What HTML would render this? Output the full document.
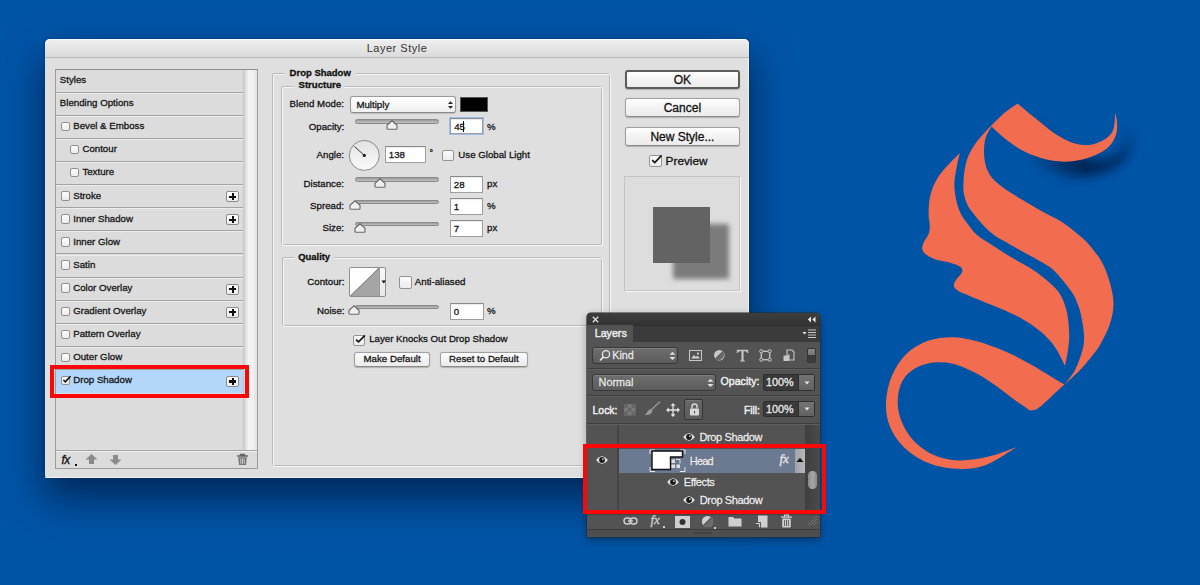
<!DOCTYPE html>
<html><head><meta charset="utf-8"><title>Layer Style</title>
<style>
html,body{margin:0;padding:0;}
body{width:1200px;height:585px;overflow:hidden;position:relative;background:#0054a6;font-family:"Liberation Sans",sans-serif;}
.a{position:absolute;}
.t{position:absolute;line-height:1;white-space:nowrap;font-family:"Liberation Sans",sans-serif;-webkit-text-stroke:0.3px currentColor;}
</style></head><body>
<svg class="a" style="left:0;top:0" width="1200" height="585" viewBox="0 0 1200 585">
<defs><filter id="sh" x="-20%" y="-20%" width="150%" height="180%"><feGaussianBlur stdDeviation="5.5"/></filter>
<linearGradient id="mg" gradientUnits="userSpaceOnUse" x1="1025" y1="0" x2="1085" y2="0"><stop offset="0" stop-color="#000"/><stop offset="1" stop-color="#fff"/></linearGradient><mask id="mR" maskUnits="userSpaceOnUse" x="0" y="0" width="1200" height="585"><rect x="0" y="0" width="1200" height="585" fill="url(#mg)"/></mask></defs>
<g mask="url(#mR)"><path d="M1017.5 103.5 C1021.2 106.6 1033.4 116.8 1040.0 122.0 C1046.6 127.2 1051.3 131.5 1057.0 135.0 C1062.7 138.5 1068.3 141.6 1074.0 143.2 C1079.7 144.8 1085.7 145.6 1091.0 144.8 C1096.3 144.0 1102.2 141.1 1106.0 138.5 C1109.8 135.9 1112.0 133.2 1113.5 129.0 C1115.0 124.8 1114.9 115.7 1115.2 113.0 C1115.5 114.5 1116.9 118.4 1117.0 122.0 C1117.1 125.6 1117.4 130.3 1116.0 134.5 C1114.6 138.7 1112.5 143.3 1108.5 147.0 C1104.5 150.7 1098.4 154.1 1092.0 156.5 C1085.6 158.9 1077.5 161.0 1070.0 161.5 C1062.5 162.0 1054.3 161.2 1046.7 159.5 C1039.1 157.8 1031.1 154.8 1024.4 151.5 C1017.7 148.2 1012.2 144.2 1006.7 140.0 C1001.2 135.8 994.0 128.8 991.5 126.5 C995.8 122.7 1013.2 107.3 1017.5 103.5 Z" transform="translate(13,15)" fill="#001a45" opacity="0.85" filter="url(#sh)"/></g>
<path d="M1017.5 103.5 C1021.2 106.6 1033.4 116.8 1040.0 122.0 C1046.6 127.2 1051.3 131.5 1057.0 135.0 C1062.7 138.5 1068.3 141.6 1074.0 143.2 C1079.7 144.8 1085.7 145.6 1091.0 144.8 C1096.3 144.0 1102.2 141.1 1106.0 138.5 C1109.8 135.9 1112.0 133.2 1113.5 129.0 C1115.0 124.8 1114.9 115.7 1115.2 113.0 C1115.5 114.5 1116.9 118.4 1117.0 122.0 C1117.1 125.6 1117.4 130.3 1116.0 134.5 C1114.6 138.7 1112.5 143.3 1108.5 147.0 C1104.5 150.7 1098.4 154.1 1092.0 156.5 C1085.6 158.9 1077.5 161.0 1070.0 161.5 C1062.5 162.0 1054.3 161.2 1046.7 159.5 C1039.1 157.8 1031.1 154.8 1024.4 151.5 C1017.7 148.2 1012.2 144.2 1006.7 140.0 C1001.2 135.8 994.0 128.8 991.5 126.5 C990.5 128.4 986.9 133.5 985.6 138.0 C984.4 142.5 983.8 148.2 984.0 153.3 C984.2 158.4 984.9 163.9 986.7 168.5 C988.5 173.1 990.8 176.8 995.0 181.0 C999.2 185.2 1004.9 188.8 1012.0 193.5 C1019.1 198.2 1029.4 204.1 1037.8 208.9 C1046.2 213.7 1054.8 217.4 1062.2 222.2 C1069.6 227.0 1077.0 233.2 1082.2 237.8 C1087.4 242.4 1089.8 245.6 1093.3 250.0 C1096.8 254.4 1100.0 258.2 1102.9 264.0 C1105.8 269.8 1108.7 278.2 1110.5 285.0 C1112.3 291.8 1113.7 298.3 1113.5 305.0 C1113.3 311.7 1111.8 318.3 1109.5 325.0 C1107.2 331.7 1102.9 339.8 1100.0 345.0 C1097.1 350.2 1095.3 351.8 1092.0 356.0 C1088.7 360.2 1084.6 365.2 1080.0 370.0 C1075.4 374.8 1067.1 382.1 1064.5 384.5 C1066.2 382.1 1072.0 375.8 1075.0 370.0 C1078.0 364.2 1081.0 355.8 1082.5 350.0 C1084.0 344.2 1084.2 340.8 1084.0 335.0 C1083.8 329.2 1082.0 320.0 1081.0 315.0 C1080.0 310.0 1079.3 308.5 1078.0 305.0 C1076.7 301.5 1075.6 298.2 1073.0 294.0 C1070.4 289.8 1065.8 284.0 1062.5 280.0 C1059.2 276.0 1056.4 272.7 1053.5 270.0 C1050.6 267.3 1049.4 266.7 1045.0 264.0 C1040.6 261.3 1032.8 257.2 1027.0 254.0 C1021.2 250.8 1015.5 247.7 1010.0 244.5 C1004.5 241.3 998.5 238.2 994.0 235.0 C989.5 231.8 986.2 228.3 983.0 225.0 C979.8 221.7 977.1 218.3 974.5 215.0 C971.9 211.7 969.3 208.8 967.5 205.0 C965.7 201.2 964.2 196.2 963.6 192.0 C963.0 187.8 963.4 184.0 963.6 180.0 C963.8 176.0 964.1 172.2 965.0 168.0 C965.9 163.8 966.5 159.8 968.8 155.0 C971.1 150.2 973.6 145.5 979.0 139.0 C984.4 132.5 994.6 121.9 1001.0 116.0 C1007.4 110.1 1014.8 105.6 1017.5 103.5 Z" fill="#f26c50"/>
<path d="M959.9 153.0 C959.5 154.9 958.1 159.9 957.2 164.6 C956.3 169.3 954.9 176.3 954.5 181.0 C954.1 185.7 954.5 189.0 955.0 193.0 C955.5 197.0 956.4 201.3 957.5 205.0 C958.6 208.7 959.7 211.7 961.5 215.0 C963.3 218.3 965.9 221.7 968.5 225.0 C971.1 228.3 973.1 231.7 977.0 235.0 C980.9 238.3 986.9 241.7 992.0 245.0 C997.1 248.3 1002.0 251.7 1007.5 255.0 C1013.0 258.3 1020.6 262.4 1025.0 265.0 C1029.4 267.6 1030.4 268.0 1034.0 270.5 C1037.6 273.0 1042.7 276.8 1046.5 280.0 C1050.3 283.2 1054.2 286.7 1057.0 290.0 C1059.8 293.3 1061.2 295.8 1063.0 300.0 C1064.8 304.2 1066.5 309.2 1067.5 315.0 C1068.5 320.8 1069.2 329.2 1069.2 335.0 C1069.3 340.8 1068.7 344.8 1068.0 350.0 C1067.3 355.2 1065.5 363.3 1065.0 366.0 C1063.4 362.9 1059.3 353.3 1055.4 347.7 C1051.5 342.1 1047.2 337.2 1041.5 332.3 C1035.8 327.4 1028.7 322.6 1021.5 318.5 C1014.3 314.4 1006.2 311.0 998.5 307.7 C990.8 304.4 980.6 300.6 975.4 298.5 C970.2 296.4 970.2 296.1 967.5 295.0 C964.8 293.9 961.5 293.1 959.2 291.6 C956.9 290.1 954.2 288.2 953.8 286.1 C953.3 284.1 955.1 281.6 956.5 279.3 C957.9 277.0 961.3 274.6 962.0 272.5 C962.7 270.4 962.4 268.6 960.6 267.0 C958.8 265.4 954.9 264.0 951.0 262.9 C947.1 261.8 941.5 261.5 937.4 260.1 C933.3 258.7 928.9 256.5 926.4 254.7 C923.9 252.9 922.8 251.2 922.3 249.2 C921.8 247.1 922.7 244.9 923.7 242.4 C924.7 239.9 927.5 236.9 928.5 234.2 C929.5 231.5 929.8 229.0 929.8 226.0 C929.8 223.0 928.8 220.1 928.7 216.0 C928.6 211.9 928.6 206.3 929.2 201.6 C929.9 196.9 930.8 192.5 932.6 187.9 C934.4 183.3 937.0 178.5 940.1 174.2 C943.2 169.9 947.7 165.4 951.0 161.9 C954.3 158.4 958.4 154.5 959.9 153.0 Z" fill="#f26c50"/>
<path d="M1064.5 384.5 C1062.3 383.2 1057.2 380.3 1051.6 377.0 C1046.0 373.7 1037.8 368.5 1031.0 364.6 C1024.2 360.7 1017.3 356.9 1010.5 353.7 C1003.7 350.5 996.6 347.8 990.0 345.5 C983.4 343.2 977.4 341.2 971.0 339.8 C964.6 338.4 959.0 337.0 951.8 337.2 C944.6 337.4 935.4 338.0 927.8 340.8 C920.2 343.6 912.3 348.1 906.3 353.9 C900.3 359.7 895.4 367.5 892.0 375.5 C888.6 383.5 886.4 393.4 886.0 401.8 C885.6 410.2 886.6 418.1 889.6 425.7 C892.6 433.3 897.5 441.0 903.9 447.2 C910.3 453.4 919.0 459.2 927.8 462.8 C936.6 466.4 947.0 468.4 956.6 468.8 C966.2 469.2 975.3 468.8 985.3 465.2 C995.3 461.6 1011.2 450.2 1016.4 447.2 C1011.6 448.8 997.3 454.6 987.7 456.8 C978.1 459.0 968.1 460.8 958.9 460.4 C949.7 460.0 940.6 458.2 932.6 454.4 C924.6 450.6 916.7 444.5 911.1 437.7 C905.5 430.9 901.1 421.7 899.1 413.7 C897.1 405.7 897.5 396.6 899.1 389.8 C900.7 383.0 903.9 377.5 908.7 373.1 C913.5 368.7 920.6 365.1 927.8 363.5 C935.0 361.9 943.8 361.9 951.8 363.5 C959.8 365.1 968.5 369.5 975.7 373.1 C982.9 376.7 988.4 380.6 994.8 385.0 C1001.2 389.4 1008.2 395.2 1014.0 399.4 C1019.8 403.6 1027.1 408.6 1029.7 410.4 C1030.8 410.2 1033.6 410.6 1036.0 409.5 C1038.4 408.4 1041.0 406.1 1044.0 403.5 C1047.0 400.9 1050.6 397.2 1054.0 394.0 C1057.4 390.8 1062.8 386.1 1064.5 384.5 Z" fill="#f26c50"/>
</svg>
<div class="a" style="left:45.00px;top:38.50px;width:704.00px;height:439.50px;background:#dfdfdf;border-radius:5px 5px 3px 3px;box-shadow:0 20px 40px 0px rgba(0,8,35,0.6),0 0 3px rgba(0,0,0,0.2);"></div>
<div class="a" style="left:45.00px;top:38.50px;width:704.00px;height:19.00px;background:linear-gradient(#eeeeee,#dadada);border-radius:5px 5px 0 0;border-top:1px solid #fafafa;box-sizing:border-box;"></div>
<div class="a" style="left:45.00px;top:57.00px;width:704.00px;height:1.00px;background:#b8b8b8;"></div>
<div class="a" style="left:747.50px;top:58.00px;width:1.50px;height:420.00px;background:#f2f2f2;"></div>
<div class="a" style="left:45.00px;top:476.80px;width:704.00px;height:1.20px;background:#f2f2f2;border-radius:0 0 3px 3px;"></div>
<div class="t" style="left:97.00px;width:600px;text-align:center;top:43.29px;font-size:11px;font-weight:400;color:#333;letter-spacing:0.5px;-webkit-text-stroke:0;">Layer Style</div>
<div class="a" style="left:54.50px;top:68.50px;width:203.00px;height:400.00px;background:#dcdcdc;border:1px solid #9c9c9c;border-top-color:#8e8e8e;box-sizing:border-box;"></div>
<div class="a" style="left:242.50px;top:69.50px;width:14.00px;height:381.00px;background:linear-gradient(90deg,#d0d0d0,#f4f4f4 35%,#f2f2f2 65%,#e2e2e2);border-left:1px solid #c8c8c8;box-sizing:border-box;"></div>
<div class="a" style="left:55.50px;top:91.70px;width:187.00px;height:1.10px;background:#a2a2a2;"></div>
<div class="a" style="left:55.50px;top:92.80px;width:187.00px;height:0.70px;background:#ededed;"></div>
<div class="t" style="left:59.80px;top:75.09px;font-size:9.7px;font-weight:400;color:#161616;">Styles</div>
<div class="a" style="left:55.50px;top:114.80px;width:187.00px;height:1.10px;background:#a2a2a2;"></div>
<div class="a" style="left:55.50px;top:115.90px;width:187.00px;height:0.70px;background:#ededed;"></div>
<div class="t" style="left:59.80px;top:98.19px;font-size:9.7px;font-weight:400;color:#161616;">Blending Options</div>
<div class="a" style="left:55.50px;top:137.90px;width:187.00px;height:1.10px;background:#a2a2a2;"></div>
<div class="a" style="left:55.50px;top:139.00px;width:187.00px;height:0.70px;background:#ededed;"></div>
<div class="a" style="left:60.50px;top:121.70px;width:9.50px;height:9.50px;background:linear-gradient(#fdfdfd,#ececec);border:1px solid #8f8f8f;border-radius:2px;box-sizing:border-box;"></div>
<div class="t" style="left:73.20px;top:121.29px;font-size:9.7px;font-weight:400;color:#161616;">Bevel &amp; Emboss</div>
<div class="a" style="left:55.50px;top:161.00px;width:187.00px;height:1.10px;background:#a2a2a2;"></div>
<div class="a" style="left:55.50px;top:162.10px;width:187.00px;height:0.70px;background:#ededed;"></div>
<div class="a" style="left:69.80px;top:144.80px;width:9.50px;height:9.50px;background:linear-gradient(#fdfdfd,#ececec);border:1px solid #8f8f8f;border-radius:2px;box-sizing:border-box;"></div>
<div class="t" style="left:82.40px;top:144.39px;font-size:9.7px;font-weight:400;color:#161616;">Contour</div>
<div class="a" style="left:55.50px;top:184.10px;width:187.00px;height:1.10px;background:#a2a2a2;"></div>
<div class="a" style="left:55.50px;top:185.20px;width:187.00px;height:0.70px;background:#ededed;"></div>
<div class="a" style="left:69.80px;top:167.90px;width:9.50px;height:9.50px;background:linear-gradient(#fdfdfd,#ececec);border:1px solid #8f8f8f;border-radius:2px;box-sizing:border-box;"></div>
<div class="t" style="left:82.40px;top:167.49px;font-size:9.7px;font-weight:400;color:#161616;">Texture</div>
<div class="a" style="left:55.50px;top:207.20px;width:187.00px;height:1.10px;background:#a2a2a2;"></div>
<div class="a" style="left:55.50px;top:208.30px;width:187.00px;height:0.70px;background:#ededed;"></div>
<div class="a" style="left:60.50px;top:191.00px;width:9.50px;height:9.50px;background:linear-gradient(#fdfdfd,#ececec);border:1px solid #8f8f8f;border-radius:2px;box-sizing:border-box;"></div>
<div class="t" style="left:73.20px;top:190.59px;font-size:9.7px;font-weight:400;color:#161616;">Stroke</div>
<div class="a" style="left:226.40px;top:191.20px;width:12.30px;height:11.00px;background:linear-gradient(#ffffff,#ececec);border:1px solid #8a8a8a;border-radius:2px;box-sizing:border-box;"></div>
<div class="a" style="left:229.00px;top:195.60px;width:7.20px;height:2.20px;background:#111;"></div>
<div class="a" style="left:231.50px;top:193.10px;width:2.20px;height:7.20px;background:#111;"></div>
<div class="a" style="left:55.50px;top:230.30px;width:187.00px;height:1.10px;background:#a2a2a2;"></div>
<div class="a" style="left:55.50px;top:231.40px;width:187.00px;height:0.70px;background:#ededed;"></div>
<div class="a" style="left:60.50px;top:214.10px;width:9.50px;height:9.50px;background:linear-gradient(#fdfdfd,#ececec);border:1px solid #8f8f8f;border-radius:2px;box-sizing:border-box;"></div>
<div class="t" style="left:73.20px;top:213.69px;font-size:9.7px;font-weight:400;color:#161616;">Inner Shadow</div>
<div class="a" style="left:226.40px;top:214.30px;width:12.30px;height:11.00px;background:linear-gradient(#ffffff,#ececec);border:1px solid #8a8a8a;border-radius:2px;box-sizing:border-box;"></div>
<div class="a" style="left:229.00px;top:218.70px;width:7.20px;height:2.20px;background:#111;"></div>
<div class="a" style="left:231.50px;top:216.20px;width:2.20px;height:7.20px;background:#111;"></div>
<div class="a" style="left:55.50px;top:253.40px;width:187.00px;height:1.10px;background:#a2a2a2;"></div>
<div class="a" style="left:55.50px;top:254.50px;width:187.00px;height:0.70px;background:#ededed;"></div>
<div class="a" style="left:60.50px;top:237.20px;width:9.50px;height:9.50px;background:linear-gradient(#fdfdfd,#ececec);border:1px solid #8f8f8f;border-radius:2px;box-sizing:border-box;"></div>
<div class="t" style="left:73.20px;top:236.79px;font-size:9.7px;font-weight:400;color:#161616;">Inner Glow</div>
<div class="a" style="left:55.50px;top:276.50px;width:187.00px;height:1.10px;background:#a2a2a2;"></div>
<div class="a" style="left:55.50px;top:277.60px;width:187.00px;height:0.70px;background:#ededed;"></div>
<div class="a" style="left:60.50px;top:260.30px;width:9.50px;height:9.50px;background:linear-gradient(#fdfdfd,#ececec);border:1px solid #8f8f8f;border-radius:2px;box-sizing:border-box;"></div>
<div class="t" style="left:73.20px;top:259.89px;font-size:9.7px;font-weight:400;color:#161616;">Satin</div>
<div class="a" style="left:55.50px;top:299.60px;width:187.00px;height:1.10px;background:#a2a2a2;"></div>
<div class="a" style="left:55.50px;top:300.70px;width:187.00px;height:0.70px;background:#ededed;"></div>
<div class="a" style="left:60.50px;top:283.40px;width:9.50px;height:9.50px;background:linear-gradient(#fdfdfd,#ececec);border:1px solid #8f8f8f;border-radius:2px;box-sizing:border-box;"></div>
<div class="t" style="left:73.20px;top:282.99px;font-size:9.7px;font-weight:400;color:#161616;">Color Overlay</div>
<div class="a" style="left:226.40px;top:283.60px;width:12.30px;height:11.00px;background:linear-gradient(#ffffff,#ececec);border:1px solid #8a8a8a;border-radius:2px;box-sizing:border-box;"></div>
<div class="a" style="left:229.00px;top:288.00px;width:7.20px;height:2.20px;background:#111;"></div>
<div class="a" style="left:231.50px;top:285.50px;width:2.20px;height:7.20px;background:#111;"></div>
<div class="a" style="left:55.50px;top:322.70px;width:187.00px;height:1.10px;background:#a2a2a2;"></div>
<div class="a" style="left:55.50px;top:323.80px;width:187.00px;height:0.70px;background:#ededed;"></div>
<div class="a" style="left:60.50px;top:306.50px;width:9.50px;height:9.50px;background:linear-gradient(#fdfdfd,#ececec);border:1px solid #8f8f8f;border-radius:2px;box-sizing:border-box;"></div>
<div class="t" style="left:73.20px;top:306.09px;font-size:9.7px;font-weight:400;color:#161616;">Gradient Overlay</div>
<div class="a" style="left:226.40px;top:306.70px;width:12.30px;height:11.00px;background:linear-gradient(#ffffff,#ececec);border:1px solid #8a8a8a;border-radius:2px;box-sizing:border-box;"></div>
<div class="a" style="left:229.00px;top:311.10px;width:7.20px;height:2.20px;background:#111;"></div>
<div class="a" style="left:231.50px;top:308.60px;width:2.20px;height:7.20px;background:#111;"></div>
<div class="a" style="left:55.50px;top:345.80px;width:187.00px;height:1.10px;background:#a2a2a2;"></div>
<div class="a" style="left:55.50px;top:346.90px;width:187.00px;height:0.70px;background:#ededed;"></div>
<div class="a" style="left:60.50px;top:329.60px;width:9.50px;height:9.50px;background:linear-gradient(#fdfdfd,#ececec);border:1px solid #8f8f8f;border-radius:2px;box-sizing:border-box;"></div>
<div class="t" style="left:73.20px;top:329.19px;font-size:9.7px;font-weight:400;color:#161616;">Pattern Overlay</div>
<div class="a" style="left:55.50px;top:368.90px;width:187.00px;height:1.10px;background:#a2a2a2;"></div>
<div class="a" style="left:55.50px;top:370.00px;width:187.00px;height:0.70px;background:#ededed;"></div>
<div class="a" style="left:60.50px;top:352.70px;width:9.50px;height:9.50px;background:linear-gradient(#fdfdfd,#ececec);border:1px solid #8f8f8f;border-radius:2px;box-sizing:border-box;"></div>
<div class="t" style="left:73.20px;top:352.29px;font-size:9.7px;font-weight:400;color:#161616;">Outer Glow</div>
<div class="a" style="left:55.50px;top:369.50px;width:187.00px;height:23.10px;background:#b3d6fb;"></div>
<div class="a" style="left:60.50px;top:375.80px;width:9.50px;height:9.50px;background:linear-gradient(#fdfdfd,#ececec);border:1px solid #8f8f8f;border-radius:2px;box-sizing:border-box;"></div>
<svg class="a" style="left:60.50px;top:375.80px;overflow:visible" width="9.50" height="9.50"><path d="M2.38 3.99 L4.37 5.89 L9.50 0.28" stroke="#111" stroke-width="1.6" fill="none"/></svg>
<div class="t" style="left:73.20px;top:375.39px;font-size:9.7px;font-weight:400;color:#161616;">Drop Shadow</div>
<div class="a" style="left:226.40px;top:376.00px;width:12.30px;height:11.00px;background:linear-gradient(#ffffff,#ececec);border:1px solid #8a8a8a;border-radius:2px;box-sizing:border-box;"></div>
<div class="a" style="left:229.00px;top:380.40px;width:7.20px;height:2.20px;background:#111;"></div>
<div class="a" style="left:231.50px;top:377.90px;width:2.20px;height:7.20px;background:#111;"></div>
<div class="a" style="left:55.50px;top:450.00px;width:201.00px;height:1.00px;background:#a5a5a5;"></div>
<div class="a" style="left:55.50px;top:451.00px;width:201.00px;height:1.00px;background:#f0f0f0;"></div>
<div class="t" style="left:61.5px;top:453.5px;font-size:12px;font-style:italic;color:#111;letter-spacing:-0.5px">fx</div>
<div class="a" style="left:74.50px;top:464.00px;width:2.00px;height:2.00px;background:#111;"></div>
<svg class="a" style="left:85px;top:454px" width="14" height="11"><path d="M6.5 0 L12.5 5.5 L9 5.5 L9 10 L4 10 L4 5.5 L0.5 5.5Z" fill="#8a8a8a"/></svg>
<svg class="a" style="left:109px;top:455px" width="14" height="11"><path d="M6.5 10 L12.5 4.5 L9 4.5 L9 0 L4 0 L4 4.5 L0.5 4.5Z" fill="#8a8a8a"/></svg>
<svg class="a" style="left:236px;top:453px" width="13" height="13"><path d="M1 3 H12 M4.5 3 V1.5 H8.5 V3" stroke="#666" stroke-width="1.3" fill="none"/><path d="M2.2 4.2 H10.8 L10 12 H3 Z" fill="#777"/><path d="M4.8 5.5 V10.8 M6.5 5.5 V10.8 M8.2 5.5 V10.8" stroke="#ddd" stroke-width="0.8"/></svg>
<div class="a" style="left:49.50px;top:365.00px;width:199.40px;height:33.00px;border:4.1px solid #f80808;box-sizing:border-box;"></div>
<div class="a" style="left:272.30px;top:73.10px;width:337.50px;height:393.40px;border:1px solid #b9b9b9;border-radius:2px;box-sizing:border-box;"></div><div class="a" style="left:273.30px;top:74.10px;width:337.50px;height:393.40px;border:1px solid #f5f5f5;border-radius:2px;box-sizing:border-box;z-index:0;"></div>
<div class="a" style="left:285.00px;top:68.00px;width:71.00px;height:11.00px;background:#dfdfdf;"></div>
<div class="t" style="left:289.60px;top:68.16px;font-size:9.5px;font-weight:700;color:#111;">Drop Shadow</div>
<div class="a" style="left:281.20px;top:86.10px;width:320.60px;height:158.90px;border:1px solid #b9b9b9;border-radius:2px;box-sizing:border-box;"></div><div class="a" style="left:282.20px;top:87.10px;width:320.60px;height:158.90px;border:1px solid #f5f5f5;border-radius:2px;box-sizing:border-box;z-index:0;"></div>
<div class="a" style="left:294.00px;top:81.00px;width:51.00px;height:11.00px;background:#dfdfdf;"></div>
<div class="t" style="left:298.50px;top:80.47px;font-size:9.6px;font-weight:700;color:#111;">Structure</div>
<div class="a" style="left:281.80px;top:256.60px;width:320.40px;height:69.20px;border:1px solid #b9b9b9;border-radius:2px;box-sizing:border-box;"></div><div class="a" style="left:282.80px;top:257.60px;width:320.40px;height:69.20px;border:1px solid #f5f5f5;border-radius:2px;box-sizing:border-box;z-index:0;"></div>
<div class="a" style="left:294.00px;top:251.00px;width:40.00px;height:11.00px;background:#dfdfdf;"></div>
<div class="t" style="left:298.30px;top:251.84px;font-size:9.4px;font-weight:700;color:#111;">Quality</div>
<div class="t" style="left:289.60px;top:99.19px;font-size:9.7px;font-weight:400;color:#161616;">Blend Mode:</div>
<div class="a" style="left:350.30px;top:96.20px;width:105.30px;height:16.40px;background:linear-gradient(#ffffff,#f0f0f0);border:1px solid #9a9a9a;border-bottom-color:#8a8a8a;border-radius:3px;box-sizing:border-box;box-shadow:0 0.5px 1px rgba(0,0,0,0.15);"></div>
<div class="t" style="left:356.40px;top:99.59px;font-size:9.7px;font-weight:400;color:#161616;">Multiply</div>
<svg class="a" style="left:446.5px;top:99.5px" width="7" height="10"><path d="M1 4 L3.5 1.2 L6 4Z M1 6 L3.5 8.8 L6 6Z" fill="#222"/></svg>
<div class="a" style="left:460.00px;top:97.10px;width:27.70px;height:14.80px;background:#000;border:1px solid #555;box-sizing:border-box;"></div>
<div class="t" style="right:855.70px;top:121.59px;font-size:9.7px;font-weight:400;color:#161616;">Opacity:</div>
<div class="a" style="left:354.50px;top:119.40px;width:84.50px;height:4.60px;background:linear-gradient(#9a9a9a,#c2c2c2);border-radius:2.3px;border:0.8px solid #8a8a8a;box-sizing:border-box;"></div><svg class="a" style="left:386.40px;top:120.20px" width="12" height="10"><path d="M6 0.8 L11 5.2 L11 8.2 Q11 9.2 10 9.2 L2 9.2 Q1 9.2 1 8.2 L1 5.2Z" fill="#efefef" stroke="#686868" stroke-width="1.15"/></svg>
<div class="a" style="left:450.40px;top:118.30px;width:32.80px;height:16.00px;background:#fff;border:1px solid #9d9d9d;border-top-color:#8a8a8a;box-sizing:border-box;box-shadow:inset 0 1px 1px rgba(0,0,0,0.08);outline:1.6px solid #9dbdf0;outline-offset:0px;"></div><div class="t" style="left:454.20px;top:122.39px;font-size:9.7px;font-weight:400;color:#161616;">45</div>
<div class="a" style="left:463.40px;top:121.30px;width:1.00px;height:11.00px;background:#111;"></div>
<div class="t" style="left:487.00px;top:121.59px;font-size:9.7px;font-weight:400;color:#161616;">%</div>
<div class="t" style="right:856.00px;top:149.59px;font-size:9.7px;font-weight:400;color:#161616;">Angle:</div>
<svg class="a" style="left:348px;top:139px" width="33" height="33"><defs><linearGradient id="dg" x1="0" y1="0" x2="0" y2="1"><stop offset="0" stop-color="#e2e2e2"/><stop offset="1" stop-color="#fbfbfb"/></linearGradient></defs><circle cx="16.3" cy="16.4" r="15" fill="url(#dg)" stroke="#8c8c8c" stroke-width="1"/><line x1="16.3" y1="16.4" x2="6.4" y2="7.4" stroke="#333" stroke-width="1"/><circle cx="16.3" cy="16.4" r="1.6" fill="#222"/></svg>
<div class="a" style="left:385.00px;top:146.00px;width:41.00px;height:16.50px;background:#fff;border:1px solid #9d9d9d;border-top-color:#8a8a8a;box-sizing:border-box;box-shadow:inset 0 1px 1px rgba(0,0,0,0.08);"></div><div class="t" style="left:388.80px;top:150.09px;font-size:9.7px;font-weight:400;color:#161616;">138</div>
<div class="t" style="left:429.50px;top:148.88px;font-size:9px;font-weight:400;color:#161616;">&#176;</div>
<div class="a" style="left:442.00px;top:149.50px;width:12.20px;height:11.70px;background:linear-gradient(#fbfbfb,#ececec);border:1px solid #949494;border-radius:2px;box-sizing:border-box;"></div>
<div class="t" style="left:458.30px;top:149.59px;font-size:9.7px;font-weight:400;color:#161616;">Use Global Light</div>
<div class="t" style="right:856.00px;top:178.79px;font-size:9.7px;font-weight:400;color:#161616;">Distance:</div>
<div class="a" style="left:354.50px;top:177.30px;width:84.50px;height:4.60px;background:linear-gradient(#9a9a9a,#c2c2c2);border-radius:2.3px;border:0.8px solid #8a8a8a;box-sizing:border-box;"></div><svg class="a" style="left:373.50px;top:178.10px" width="12" height="10"><path d="M6 0.8 L11 5.2 L11 8.2 Q11 9.2 10 9.2 L2 9.2 Q1 9.2 1 8.2 L1 5.2Z" fill="#efefef" stroke="#686868" stroke-width="1.15"/></svg>
<div class="a" style="left:450.00px;top:176.00px;width:33.40px;height:16.50px;background:#fff;border:1px solid #9d9d9d;border-top-color:#8a8a8a;box-sizing:border-box;box-shadow:inset 0 1px 1px rgba(0,0,0,0.08);"></div><div class="t" style="left:453.80px;top:180.09px;font-size:9.7px;font-weight:400;color:#161616;">28</div>
<div class="t" style="left:487.00px;top:178.79px;font-size:9.7px;font-weight:400;color:#161616;">px</div>
<div class="t" style="right:856.00px;top:200.79px;font-size:9.7px;font-weight:400;color:#161616;">Spread:</div>
<div class="a" style="left:354.50px;top:199.50px;width:84.50px;height:4.60px;background:linear-gradient(#9a9a9a,#c2c2c2);border-radius:2.3px;border:0.8px solid #8a8a8a;box-sizing:border-box;"></div><svg class="a" style="left:348.80px;top:200.30px" width="12" height="10"><path d="M6 0.8 L11 5.2 L11 8.2 Q11 9.2 10 9.2 L2 9.2 Q1 9.2 1 8.2 L1 5.2Z" fill="#efefef" stroke="#686868" stroke-width="1.15"/></svg>
<div class="a" style="left:450.00px;top:198.00px;width:33.40px;height:16.50px;background:#fff;border:1px solid #9d9d9d;border-top-color:#8a8a8a;box-sizing:border-box;box-shadow:inset 0 1px 1px rgba(0,0,0,0.08);"></div><div class="t" style="left:453.80px;top:202.09px;font-size:9.7px;font-weight:400;color:#161616;">1</div>
<div class="t" style="left:487.00px;top:200.79px;font-size:9.7px;font-weight:400;color:#161616;">%</div>
<div class="t" style="right:856.00px;top:223.19px;font-size:9.7px;font-weight:400;color:#161616;">Size:</div>
<div class="a" style="left:354.50px;top:221.80px;width:84.50px;height:4.60px;background:linear-gradient(#9a9a9a,#c2c2c2);border-radius:2.3px;border:0.8px solid #8a8a8a;box-sizing:border-box;"></div><svg class="a" style="left:353.70px;top:222.60px" width="12" height="10"><path d="M6 0.8 L11 5.2 L11 8.2 Q11 9.2 10 9.2 L2 9.2 Q1 9.2 1 8.2 L1 5.2Z" fill="#efefef" stroke="#686868" stroke-width="1.15"/></svg>
<div class="a" style="left:450.00px;top:220.00px;width:33.40px;height:16.50px;background:#fff;border:1px solid #9d9d9d;border-top-color:#8a8a8a;box-sizing:border-box;box-shadow:inset 0 1px 1px rgba(0,0,0,0.08);"></div><div class="t" style="left:453.80px;top:224.09px;font-size:9.7px;font-weight:400;color:#161616;">7</div>
<div class="t" style="left:487.00px;top:223.19px;font-size:9.7px;font-weight:400;color:#161616;">px</div>
<div class="t" style="right:855.50px;top:276.79px;font-size:9.7px;font-weight:400;color:#161616;">Contour:</div>
<div class="a" style="left:349.30px;top:267.00px;width:37.00px;height:30.30px;background:linear-gradient(#f8f8f8,#e8e8e8);border:1px solid #8f8f8f;border-radius:2px;box-sizing:border-box;"></div>
<svg class="a" style="left:350.3px;top:268px" width="29" height="28.3"><rect width="29" height="28.3" fill="#fff"/><path d="M0 28.3 L29 0 L29 28.3Z" fill="#a5a5a5"/><path d="M0 28.3 L29 0" stroke="#555" stroke-width="0.8"/></svg>
<div class="a" style="left:379.00px;top:268.00px;width:1.00px;height:28.30px;background:#9a9a9a;"></div>
<svg class="a" style="left:380.5px;top:280px" width="6" height="5"><path d="M0.5 0.5 L5 0.5 L2.75 3.5Z" fill="#111"/></svg>
<div class="a" style="left:398.80px;top:276.20px;width:12.80px;height:12.40px;background:linear-gradient(#fbfbfb,#ececec);border:1px solid #949494;border-radius:2px;box-sizing:border-box;"></div>
<div class="t" style="left:414.80px;top:276.79px;font-size:9.7px;font-weight:400;color:#161616;">Anti-aliased</div>
<div class="t" style="right:855.50px;top:306.49px;font-size:9.7px;font-weight:400;color:#161616;">Noise:</div>
<div class="a" style="left:354.50px;top:304.60px;width:84.50px;height:4.60px;background:linear-gradient(#9a9a9a,#c2c2c2);border-radius:2.3px;border:0.8px solid #8a8a8a;box-sizing:border-box;"></div><svg class="a" style="left:348.30px;top:305.40px" width="12" height="10"><path d="M6 0.8 L11 5.2 L11 8.2 Q11 9.2 10 9.2 L2 9.2 Q1 9.2 1 8.2 L1 5.2Z" fill="#efefef" stroke="#686868" stroke-width="1.15"/></svg>
<div class="a" style="left:450.00px;top:303.30px;width:33.50px;height:16.50px;background:#fff;border:1px solid #9d9d9d;border-top-color:#8a8a8a;box-sizing:border-box;box-shadow:inset 0 1px 1px rgba(0,0,0,0.08);"></div><div class="t" style="left:453.80px;top:307.39px;font-size:9.7px;font-weight:400;color:#161616;">0</div>
<div class="t" style="left:487.00px;top:306.49px;font-size:9.7px;font-weight:400;color:#161616;">%</div>
<div class="a" style="left:353.00px;top:334.70px;width:12.00px;height:11.10px;background:linear-gradient(#fbfbfb,#ececec);border:1px solid #949494;border-radius:2px;box-sizing:border-box;"></div>
<svg class="a" style="left:353.00px;top:334.70px;overflow:visible" width="12.00" height="11.10"><path d="M3.00 4.66 L5.52 6.88 L12.00 0.33" stroke="#111" stroke-width="1.6" fill="none"/></svg>
<div class="t" style="left:369.20px;top:334.39px;font-size:9.7px;font-weight:400;color:#161616;">Layer Knocks Out Drop Shadow</div>
<div class="a" style="left:354.20px;top:351.70px;width:75.80px;height:15.00px;background:linear-gradient(#ffffff,#f3f3f3 50%,#ececec);border:1px solid #a0a0a0;border-bottom-color:#8a8a8a;border-radius:3px;box-sizing:border-box;box-shadow:0 0.5px 1px rgba(0,0,0,0.2);"></div>
<div class="t" style="left:92.10px;width:600px;text-align:center;top:353.99px;font-size:9.7px;font-weight:400;color:#161616;">Make Default</div>
<div class="a" style="left:439.70px;top:351.70px;width:88.30px;height:15.00px;background:linear-gradient(#ffffff,#f3f3f3 50%,#ececec);border:1px solid #a0a0a0;border-bottom-color:#8a8a8a;border-radius:3px;box-sizing:border-box;box-shadow:0 0.5px 1px rgba(0,0,0,0.2);"></div>
<div class="t" style="left:183.85px;width:600px;text-align:center;top:353.99px;font-size:9.7px;font-weight:400;color:#161616;">Reset to Default</div>
<div class="a" style="left:624.80px;top:69.70px;width:115.20px;height:19.80px;background:linear-gradient(#ffffff,#f3f3f3 50%,#ececec);border:1px solid #a0a0a0;border-bottom-color:#8a8a8a;border-radius:3px;box-sizing:border-box;box-shadow:0 0.5px 1px rgba(0,0,0,0.2);border:2px solid #5c5c5c;"></div>
<div class="t" style="left:382.40px;width:600px;text-align:center;top:73.84px;font-size:12px;font-weight:400;color:#111;">OK</div>
<div class="a" style="left:624.80px;top:98.00px;width:115.20px;height:19.40px;background:linear-gradient(#ffffff,#f3f3f3 50%,#ececec);border:1px solid #a0a0a0;border-bottom-color:#8a8a8a;border-radius:3px;box-sizing:border-box;box-shadow:0 0.5px 1px rgba(0,0,0,0.2);"></div>
<div class="t" style="left:382.40px;width:600px;text-align:center;top:102.24px;font-size:12px;font-weight:400;color:#111;">Cancel</div>
<div class="a" style="left:624.80px;top:126.60px;width:115.20px;height:19.40px;background:linear-gradient(#ffffff,#f3f3f3 50%,#ececec);border:1px solid #a0a0a0;border-bottom-color:#8a8a8a;border-radius:3px;box-sizing:border-box;box-shadow:0 0.5px 1px rgba(0,0,0,0.2);"></div>
<div class="t" style="left:382.40px;width:600px;text-align:center;top:130.84px;font-size:12px;font-weight:400;color:#111;">New Style...</div>
<div class="a" style="left:649.20px;top:155.10px;width:12.60px;height:12.20px;background:linear-gradient(#fbfbfb,#ececec);border:1px solid #949494;border-radius:2px;box-sizing:border-box;"></div>
<svg class="a" style="left:649.20px;top:155.10px;overflow:visible" width="12.60" height="12.20"><path d="M3.15 5.12 L5.80 7.56 L12.60 0.37" stroke="#111" stroke-width="1.6" fill="none"/></svg>
<div class="t" style="left:665.60px;top:156.31px;font-size:11.8px;font-weight:400;color:#111;">Preview</div>
<div class="a" style="left:624.00px;top:176.40px;width:116.00px;height:114.30px;background:#dddddd;border:1px solid #c4c4c4;box-shadow:1px 1px 0 #f6f6f6;box-sizing:border-box;"></div>
<div class="a" style="left:672.50px;top:223.50px;width:56.00px;height:55.50px;background:#7b7b7b;filter:blur(2.5px);"></div>
<div class="a" style="left:653.30px;top:206.50px;width:56.70px;height:56.10px;background:#636363;"></div>
<div class="a" style="left:587.00px;top:312.50px;width:233.00px;height:224.50px;background:#535353;border-radius:4px 4px 0 0;box-shadow:0 0 0 0.6px #2a2a2a,0 3px 8px rgba(0,0,0,0.35);"></div>
<div class="a" style="left:587.00px;top:312.50px;width:233.00px;height:12.00px;background:linear-gradient(#3d3d3d,#343434);border-radius:4px 4px 0 0;"></div>
<svg class="a" style="left:592px;top:316px" width="7" height="7"><path d="M0.8 0.8 L6.2 6.2 M6.2 0.8 L0.8 6.2" stroke="#e0e0e0" stroke-width="1.3"/></svg>
<svg class="a" style="left:807px;top:316px" width="9" height="7"><path d="M4 0.5 L0.8 3.5 L4 6.5Z M8.5 0.5 L5.3 3.5 L8.5 6.5Z" fill="#e8e8e8"/></svg>
<div class="a" style="left:587.00px;top:324.50px;width:233.00px;height:17.50px;background:#3b3b3b;border-top:1px solid #2e2e2e;box-sizing:border-box;"></div>
<div class="a" style="left:587.00px;top:325.00px;width:46.20px;height:17.00px;background:#535353;"></div>
<div class="t" style="left:594.70px;top:328.24px;font-size:10.7px;font-weight:400;color:#eeeeee;-webkit-text-stroke:0.5px #eee;text-shadow:0 0 1px #222;">Layers</div>
<svg class="a" style="left:802px;top:328.5px" width="15" height="11"><path d="M0.5 3 L4.5 3 L2.5 5.5Z" fill="#e8e8e8"/><path d="M6 1 H14 M6 3.5 H14 M6 6 H14 M6 8.5 H14" stroke="#c8c8c8" stroke-width="1.1"/></svg>
<div class="a" style="left:592.20px;top:347.40px;width:86.10px;height:16.40px;background:linear-gradient(#6e6e6e,#5c5c5c);border:1px solid #383838;border-radius:3px;box-sizing:border-box;box-shadow:inset 0 1px 0 rgba(255,255,255,0.12);"></div>
<svg class="a" style="left:599px;top:349px" width="12" height="13"><circle cx="7" cy="5.2" r="3.6" stroke="#e8e8e8" stroke-width="1.3" fill="none"/><path d="M4.5 7.8 L1 11.5" stroke="#e8e8e8" stroke-width="1.8"/></svg>
<div class="t" style="left:612.20px;top:350.46px;font-size:10.8px;font-weight:400;color:#eeeeee;text-shadow:0 0 1px #222;">Kind</div>
<svg class="a" style="left:668.5px;top:350.5px" width="7" height="10"><path d="M0.5 3.8 L3.5 0.8 L6.5 3.8Z M0.5 6 L3.5 9 L6.5 6Z" fill="#e0e0e0"/></svg>
<div class="a" style="left:688.80px;top:349.50px;width:13.10px;height:11.30px;border:1.2px solid #c8c8c8;box-sizing:border-box;background:#555;"></div>
<svg class="a" style="left:690px;top:351px" width="11" height="9"><path d="M1 7.5 L4 4 L6 6 L7.5 4.5 L10 7.5Z" fill="#d0d0d0"/><circle cx="8" cy="2.6" r="1.1" fill="#d0d0d0"/></svg>
<svg class="a" style="left:712.5px;top:348.5px" width="13" height="13"><circle cx="6.3" cy="6.3" r="5.3" fill="#c8c8c8"/><path d="M2.6 10 A5.3 5.3 0 0 0 10 2.6Z" fill="#6a6a6a"/><path d="M2.6 10 L10 2.6" stroke="#555" stroke-width="1.2"/></svg>
<svg class="a" style="left:735.5px;top:348.5px" width="13" height="13"><path d="M0.8 0.8 H12.2 V4 H11.2 Q10.8 2.2 9 2.2 H7.6 V10.8 Q7.6 11.6 9 11.8 V12.4 H4 V11.8 Q5.4 11.6 5.4 10.8 V2.2 H4 Q2.2 2.2 1.8 4 H0.8Z" fill="#c4c4c4"/></svg>
<svg class="a" style="left:758.5px;top:348.5px" width="13" height="13"><rect x="2.3" y="2.3" width="8.4" height="8.4" fill="none" stroke="#c8c8c8" stroke-width="1.3"/><circle cx="2.3" cy="2.3" r="1.6" fill="#555" stroke="#c8c8c8" stroke-width="1"/><circle cx="10.7" cy="2.3" r="1.6" fill="#555" stroke="#c8c8c8" stroke-width="1"/><circle cx="2.3" cy="10.7" r="1.6" fill="#555" stroke="#c8c8c8" stroke-width="1"/><circle cx="10.7" cy="10.7" r="1.6" fill="#555" stroke="#c8c8c8" stroke-width="1"/></svg>
<svg class="a" style="left:782.5px;top:348.5px" width="12" height="13"><path d="M4 1 H9 L11 3 V11 H6 V6 H4Z" fill="none" stroke="#c8c8c8" stroke-width="1.1"/><rect x="0.5" y="6.5" width="5.5" height="5.5" fill="#c8c8c8"/></svg>
<div class="a" style="left:807.30px;top:347.50px;width:8.30px;height:15.10px;background:linear-gradient(#8a8a8a 0,#727272 50%,#3a3a3a 50%,#404040 100%);border:1px solid #333;border-radius:2px;box-sizing:border-box;"></div>
<div class="a" style="left:587.00px;top:367.50px;width:233.00px;height:1.00px;background:#3e3e3e;"></div><div class="a" style="left:587.00px;top:368.50px;width:233.00px;height:1.00px;background:#5e5e5e;"></div>
<div class="a" style="left:592.00px;top:374.00px;width:124.00px;height:17.00px;background:linear-gradient(#6e6e6e,#5c5c5c);border:1px solid #383838;border-radius:3px;box-sizing:border-box;box-shadow:inset 0 1px 0 rgba(255,255,255,0.12);"></div>
<div class="t" style="left:598.60px;top:377.06px;font-size:10.8px;font-weight:400;color:#eeeeee;text-shadow:0 0 1px #222;">Normal</div>
<svg class="a" style="left:706.5px;top:377.5px" width="7" height="10"><path d="M0.5 3.8 L3.5 0.8 L6.5 3.8Z M0.5 6 L3.5 9 L6.5 6Z" fill="#e0e0e0"/></svg>
<div class="t" style="left:720.60px;top:376.23px;font-size:10.6px;font-weight:400;color:#eeeeee;-webkit-text-stroke:0.5px #eee;text-shadow:0 0 1px #222;">Opacity:</div>
<div class="a" style="left:762.60px;top:374.00px;width:52.40px;height:17.00px;background:#3a3a3a;border:1px solid #2e2e2e;border-radius:2px;box-sizing:border-box;"></div><div class="a" style="left:798.00px;top:375.00px;width:16.00px;height:15.00px;background:linear-gradient(#747474,#626262);border-left:1px solid #2e2e2e;box-sizing:border-box;"></div><svg class="a" style="left:803.5px;top:380.50px" width="6" height="4"><path d="M0.5 0.5 L5.5 0.5 L3 3.5Z" fill="#e8e8e8"/></svg>
<div class="t" style="left:766.00px;top:377.46px;font-size:10.8px;font-weight:400;color:#eeeeee;text-shadow:0 0 1px #222;">100%</div>
<div class="a" style="left:587.00px;top:394.70px;width:233.00px;height:1.00px;background:#3e3e3e;"></div><div class="a" style="left:587.00px;top:395.70px;width:233.00px;height:1.00px;background:#5e5e5e;"></div>
<div class="t" style="left:592.60px;top:406.20px;font-size:10.4px;font-weight:400;color:#eeeeee;-webkit-text-stroke:0.5px #eee;text-shadow:0 0 1px #222;">Lock:</div>
<svg class="a" style="left:624px;top:404px" width="11.5" height="11.5"><rect width="11.5" height="11.5" fill="#7a7a7a"/><path d="M0 0 H3.8 V3.8 H0Z M7.6 0 H11.5 V3.8 H7.6Z M3.8 3.8 H7.6 V7.6 H3.8Z M0 7.6 H3.8 V11.5 H0Z M7.6 7.6 H11.5 V11.5 H7.6Z" fill="#666"/></svg>
<svg class="a" style="left:643.5px;top:401px" width="17" height="15"><path d="M16 0.8 L7 9" stroke="#9a9a9a" stroke-width="1.3"/><path d="M7.5 8.2 Q5 8 3.5 10.5 Q2.5 13 0.5 14 Q5 14.5 7 12.5 Q8.8 10.7 8.3 9Z" fill="#9a9a9a"/></svg>
<svg class="a" style="left:665.5px;top:402.5px" width="14" height="14"><path d="M7 1 V13 M1 7 H13" stroke="#e4e4e4" stroke-width="1.3"/><path d="M7 0 L9.5 2.8 H4.5Z M7 14 L9.5 11.2 H4.5Z M0 7 L2.8 4.5 V9.5Z M14 7 L11.2 4.5 V9.5Z" fill="#e4e4e4"/></svg>
<div class="a" style="left:684.40px;top:399.40px;width:19.00px;height:20.60px;background:linear-gradient(#666,#5c5c5c);border:1px solid #353535;border-radius:2px;box-sizing:border-box;box-shadow:inset 0 1px 0 rgba(255,255,255,0.1);"></div>
<svg class="a" style="left:688.5px;top:401.5px" width="11" height="15"><path d="M3 6.5 V4.5 A2.5 2.5 0 0 1 8 4.5 V6.5" stroke="#d8d8d8" stroke-width="1.4" fill="none"/><rect x="1" y="6.5" width="9" height="7" rx="0.8" fill="#d8d8d8"/><rect x="5" y="9" width="1.1" height="2.5" fill="#555"/></svg>
<div class="t" style="left:744.00px;top:405.77px;font-size:10.2px;font-weight:400;color:#eeeeee;-webkit-text-stroke:0.5px #eee;text-shadow:0 0 1px #222;">Fill:</div>
<div class="a" style="left:762.60px;top:401.40px;width:52.40px;height:16.00px;background:#3a3a3a;border:1px solid #2e2e2e;border-radius:2px;box-sizing:border-box;"></div><div class="a" style="left:798.00px;top:402.40px;width:16.00px;height:14.00px;background:linear-gradient(#747474,#626262);border-left:1px solid #2e2e2e;box-sizing:border-box;"></div><svg class="a" style="left:803.5px;top:407.40px" width="6" height="4"><path d="M0.5 0.5 L5.5 0.5 L3 3.5Z" fill="#e8e8e8"/></svg>
<div class="t" style="left:766.00px;top:404.16px;font-size:10.8px;font-weight:400;color:#eeeeee;text-shadow:0 0 1px #222;">100%</div>
<div class="a" style="left:587.00px;top:423.20px;width:233.00px;height:1.00px;background:#3e3e3e;"></div><div class="a" style="left:587.00px;top:424.20px;width:233.00px;height:1.00px;background:#5e5e5e;"></div>
<div class="a" style="left:617.00px;top:425.00px;width:1.50px;height:89.00px;background:#444;"></div>
<div class="a" style="left:805.00px;top:425.00px;width:15.00px;height:89.00px;background:linear-gradient(90deg,#3f3f3f,#4a4a4a);"></div>
<div class="a" style="left:808.20px;top:471.30px;width:8.80px;height:17.40px;background:linear-gradient(90deg,#8a8a8a,#a6a6a6,#8a8a8a);border-radius:4.4px;"></div>
<div class="a" style="left:618.50px;top:443.50px;width:186.50px;height:1.00px;background:#464646;"></div>
<svg class="a" style="left:682.10px;top:432.00px" width="14" height="10"><path d="M0.6 5 Q7 -3.6 13.4 5 Q7 13.6 0.6 5Z" fill="#e2e2e2" stroke="#2a2a2a" stroke-width="0.7"/><circle cx="7" cy="5" r="2.9" fill="#1a1a1a"/><circle cx="7.9" cy="4.1" r="0.9" fill="#e0e0e0"/></svg>
<div class="t" style="left:699.50px;top:432.09px;font-size:11px;font-weight:400;color:#eeeeee;letter-spacing:-0.38px;text-shadow:0 0 1px #222;">Drop Shadow</div>
<div class="a" style="left:618.50px;top:449.00px;width:176.50px;height:24.30px;background:#6b7991;"></div>
<div class="a" style="left:795.00px;top:449.00px;width:10.00px;height:24.30px;background:linear-gradient(90deg,#9fa3a8,#b5b8bb);"></div>
<svg class="a" style="left:796px;top:457px" width="8" height="6"><path d="M0.5 5 L4 0.8 L7.5 5Z" fill="#111"/></svg>
<svg class="a" style="left:595.20px;top:454.50px" width="14" height="10"><path d="M0.6 5 Q7 -3.6 13.4 5 Q7 13.6 0.6 5Z" fill="#e2e2e2" stroke="#2a2a2a" stroke-width="0.7"/><circle cx="7" cy="5" r="2.9" fill="#1a1a1a"/><circle cx="7.9" cy="4.1" r="0.9" fill="#e0e0e0"/></svg>
<svg class="a" style="left:648.5px;top:448.5px" width="38" height="24"><path d="M1 5 V1 H6 M31 1 H36 V5 M1 18 V22.5 H6 M31 22.5 H36 V18" stroke="#e8e8e8" stroke-width="1" fill="none"/><path d="M3 2 H33.5 V8 H21.5 V20.5 H3Z" fill="#fff" stroke="#111" stroke-width="1.4"/><rect x="22.5" y="10.5" width="3.5" height="3.5" fill="#e0e0e0"/><rect x="22.5" y="15.5" width="3.5" height="3.5" fill="#e0e0e0"/><rect x="27.5" y="15.5" width="3.5" height="3.5" fill="#e0e0e0"/><path d="M27 10.5 H31 V14.5" stroke="#e0e0e0" stroke-width="1" fill="none"/></svg>
<div class="t" style="left:689.80px;top:455.89px;font-size:11px;font-weight:400;color:#eeeeee;letter-spacing:-0.8px;text-shadow:0 0 1px #333;">Head</div>
<div class="t" style="left:779.5px;top:452px;font-size:13px;font-style:italic;font-family:'Liberation Serif',serif;color:#e8e8e8">fx</div>
<svg class="a" style="left:665.70px;top:476.90px" width="14" height="10"><path d="M0.6 5 Q7 -3.6 13.4 5 Q7 13.6 0.6 5Z" fill="#e2e2e2" stroke="#2a2a2a" stroke-width="0.7"/><circle cx="7" cy="5" r="2.9" fill="#1a1a1a"/><circle cx="7.9" cy="4.1" r="0.9" fill="#e0e0e0"/></svg>
<div class="t" style="left:683.80px;top:477.29px;font-size:11px;font-weight:400;color:#eeeeee;letter-spacing:-0.4px;text-shadow:0 0 1px #222;">Effects</div>
<svg class="a" style="left:681.80px;top:495.20px" width="14" height="10"><path d="M0.6 5 Q7 -3.6 13.4 5 Q7 13.6 0.6 5Z" fill="#e2e2e2" stroke="#2a2a2a" stroke-width="0.7"/><circle cx="7" cy="5" r="2.9" fill="#1a1a1a"/><circle cx="7.9" cy="4.1" r="0.9" fill="#e0e0e0"/></svg>
<div class="t" style="left:699.80px;top:495.09px;font-size:11px;font-weight:400;color:#eeeeee;letter-spacing:-0.38px;text-shadow:0 0 1px #222;">Drop Shadow</div>
<div class="a" style="left:587.00px;top:514.00px;width:233.00px;height:1.00px;background:#424242;"></div>
<svg class="a" style="left:623px;top:516px" width="15" height="10"><rect x="1" y="2" width="7" height="6" rx="3" fill="none" stroke="#cfcfcf" stroke-width="1.4"/><rect x="7" y="2" width="7" height="6" rx="3" fill="none" stroke="#cfcfcf" stroke-width="1.4"/><path d="M5 5 H10" stroke="#cfcfcf" stroke-width="1.4"/></svg>
<div class="t" style="left:650.5px;top:513px;font-size:13px;font-style:italic;font-family:'Liberation Serif',serif;color:#cfcfcf">fx</div>
<div class="a" style="left:663.00px;top:526.00px;width:2.00px;height:2.00px;background:#cfcfcf;"></div>
<svg class="a" style="left:675px;top:515.5px" width="15" height="12"><rect x="0" y="0" width="15" height="12" fill="#cfcfcf"/><circle cx="7.5" cy="6" r="3" fill="#333"/></svg>
<svg class="a" style="left:700.5px;top:514.5px" width="16" height="14"><circle cx="6.5" cy="6.5" r="5.6" fill="#cfcfcf"/><path d="M2.5 10.5 A5.6 5.6 0 0 0 10.5 2.5Z" fill="#6a6a6a"/><path d="M2.5 10.5 L10.5 2.5" stroke="#555" stroke-width="1.3"/><rect x="13" y="12" width="2" height="2" fill="#cfcfcf"/></svg>
<svg class="a" style="left:727.5px;top:515px" width="14" height="12"><path d="M0.5 2 H5 L6.5 3.5 H13.5 V11.5 H0.5Z" fill="#cfcfcf"/></svg>
<svg class="a" style="left:754.5px;top:514.5px" width="13" height="13"><path d="M3 0.5 H12.5 V12.5 H6 V7 H3Z" fill="#cfcfcf"/><path d="M0.8 8.5 H4.5 V12.2" stroke="#cfcfcf" stroke-width="1.2" fill="none"/></svg>
<svg class="a" style="left:780px;top:514px" width="13" height="14"><path d="M1 3.2 H12 M4.5 3 V1.2 H8.5 V3" stroke="#cfcfcf" stroke-width="1.2" fill="none"/><rect x="2.2" y="4.5" width="8.6" height="9" rx="1" fill="#cfcfcf"/><path d="M4.6 6 V12 M6.5 6 V12 M8.4 6 V12" stroke="#555" stroke-width="0.9"/></svg>
<svg class="a" style="left:807px;top:515px" width="11" height="11"><path d="M10 1 L1 10 M10 4 L4 10 M10 7 L7 10" stroke="#777" stroke-width="0.9"/></svg>
<div class="a" style="left:587.00px;top:528.60px;width:233.00px;height:1.00px;background:#3c3c3c;"></div>
<div class="a" style="left:587.00px;top:529.60px;width:233.00px;height:7.40px;background:#4e4e4e;"></div>
<div class="a" style="left:695.00px;top:531.50px;width:17.00px;height:2.50px;background:repeating-linear-gradient(90deg,#3a3a3a 0 1px,transparent 1px 2px);"></div>
<div class="a" style="left:583.00px;top:444.40px;width:242.70px;height:69.50px;border:4.4px solid #f80808;box-sizing:border-box;"></div>
</body></html>
